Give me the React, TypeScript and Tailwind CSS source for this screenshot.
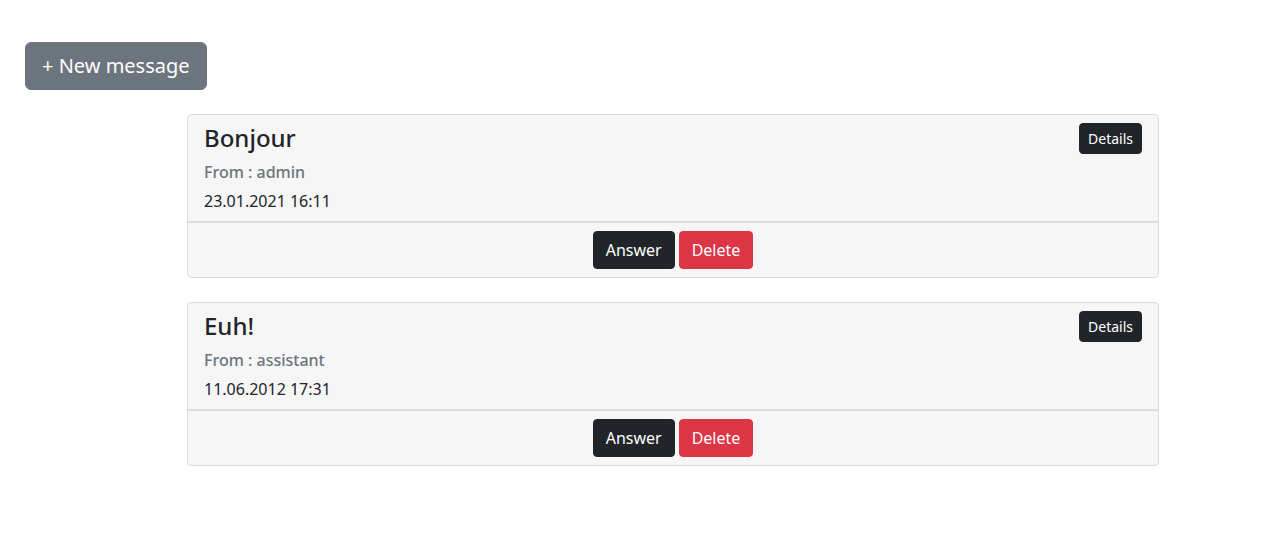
const messages = [
  { title: "Bonjour", from: "admin", date: "23.01.2021 16:11" },
  { title: "Euh!", from: "assistant", date: "11.06.2012 17:31" },
];

function MessageCard({ title, from, date }: { title: string; from: string; date: string }) {
  return (
    <div className="relative rounded border border-[#dcdcdc] bg-[#f6f6f6]">
      <button className="absolute right-4 top-2 h-[31px] rounded border border-[#212529] bg-[#212529] px-2 text-sm text-white">
        Details
      </button>
      <div className="flex flex-col px-4 pb-2 pt-2">
        <h4 className="text-2xl font-medium leading-[29px] text-[#212529]">{title}</h4>
        <h6 className="mt-2 font-medium leading-6 text-[#6c757d]">From : {from}</h6>
        <p className="mt-[5px] leading-6 text-[#212529]">{date}</p>
      </div>
      <div className="flex justify-center gap-1 border-t-2 border-[#dcdcdc] py-2">
        <button className="h-[38px] rounded border border-[#212529] bg-[#212529] px-3 text-white">
          Answer
        </button>
        <button className="h-[38px] rounded border border-[#dc3545] bg-[#dc3545] px-3 text-white">
          Delete
        </button>
      </div>
    </div>
  );
}

export default function App() {
  return (
    <div className="min-h-screen bg-white px-[25px] pt-[42px] font-['Noto_Sans',sans-serif] text-[#212529]">
      <button className="h-12 rounded-md border border-[#6c757d] bg-[#6c757d] px-4 text-xl text-white">
        + New message
      </button>
      <div className="ml-[162px] mt-6 flex w-[972px] flex-col gap-6">
        {messages.map((m) => (
          <MessageCard key={m.title} {...m} />
        ))}
      </div>
    </div>
  );
}
